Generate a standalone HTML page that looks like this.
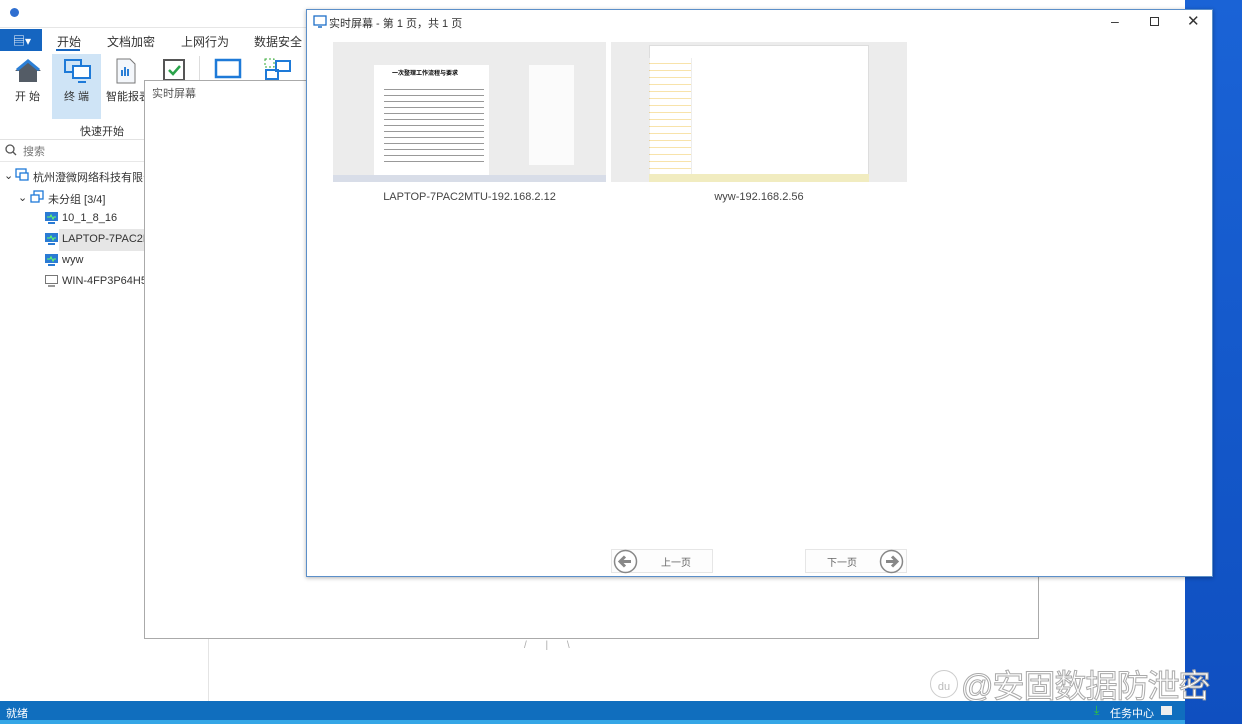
<!DOCTYPE html>
<html><head><meta charset="utf-8"><style>
*{margin:0;padding:0;box-sizing:border-box}
body{width:1242px;height:724px;overflow:hidden;position:relative;background:#fff;font-family:"Liberation Sans","Noto Sans CJK SC",sans-serif;font-size:12px;color:#333}
.a{position:absolute}
.tab{position:absolute;top:33px;font-size:12px;color:#333}
.lbl{position:absolute;font-size:11px;color:#333}
.tree{position:absolute;font-size:11px;color:#333;white-space:nowrap}
.thumb{position:absolute;background:#ececec}
</style></head><body>
<div class="a" style="left:1185px;top:0;width:57px;height:724px;background:linear-gradient(#1a63d6,#0f4fc0)"></div>
<div class="a" style="left:10px;top:8px;width:9px;height:9px;border-radius:50%;background:#2f6fd0"></div>
<div class="a" style="left:0;top:29px;width:42px;height:22px;background:#1565c0;color:#fff;font-size:12px;padding:3px 0 0 13px">▤▾</div>
<div class="tab" style="left:57px">开始</div>
<div class="a" style="left:56px;top:49px;width:24px;height:2px;background:#1565c0"></div>
<div class="tab" style="left:107px">文档加密</div>
<div class="tab" style="left:181px">上网行为</div>
<div class="tab" style="left:254px">数据安全</div>
<div class="a" style="left:0;top:27px;width:307px;height:1px;background:#e6e6e6"></div>
<div class="a" style="left:52px;top:54px;width:49px;height:65px;background:#cfe4f6"></div>
<svg class="a" style="left:14px;top:58px" width="28" height="26"><path d="M14 2 L1 13 H5 V24 H23 V13 H27 Z" fill="#545c66"/><path d="M3 12 L14 3 L25 12" stroke="#2c7fd6" stroke-width="3" fill="none"/></svg>
<div class="lbl" style="left:15px;top:88px">开 始</div>
<svg class="a" style="left:63px;top:58px" width="30" height="26"><rect x="2" y="2" width="16" height="12" fill="none" stroke="#1e7ad8" stroke-width="2"/><rect x="10" y="8" width="17" height="12" fill="#fff" stroke="#1e7ad8" stroke-width="2"/><path d="M15 24h8" stroke="#1e7ad8" stroke-width="2"/></svg>
<div class="lbl" style="left:64px;top:88px">终 端</div>
<svg class="a" style="left:115px;top:58px" width="22" height="26"><path d="M2 1h13l5 5v19H2z" fill="#f4f7fb" stroke="#777"/><rect x="6" y="12" width="2" height="6" fill="#2c7fd6"/><rect x="9" y="9" width="2" height="9" fill="#2c7fd6"/><rect x="12" y="11" width="2" height="7" fill="#2c7fd6"/></svg>
<div class="lbl" style="left:106px;top:88px">智能报表</div>
<svg class="a" style="left:162px;top:57px" width="24" height="24"><rect x="2" y="3" width="20" height="20" fill="none" stroke="#555" stroke-width="2"/><path d="M7 13l4 4 7-8" stroke="#2aa34a" stroke-width="2.5" fill="none"/></svg>
<div class="a" style="left:199px;top:56px;width:1px;height:50px;background:#ddd"></div>
<svg class="a" style="left:214px;top:58px" width="28" height="22"><rect x="2" y="2" width="24" height="17" fill="none" stroke="#1e7ad8" stroke-width="2.5"/></svg>
<svg class="a" style="left:264px;top:58px" width="28" height="22"><rect x="1" y="1" width="9" height="8" fill="none" stroke="#3a3" stroke-dasharray="2 2"/><rect x="12" y="3" width="14" height="10" fill="none" stroke="#1e7ad8" stroke-width="2"/><rect x="2" y="12" width="12" height="9" fill="none" stroke="#1e7ad8" stroke-width="2"/></svg>
<div class="lbl" style="left:80px;top:123px">快速开始</div>
<div class="a" style="left:0;top:139px;width:208px;height:1px;background:#e2e2e2"></div>
<svg class="a" style="left:5px;top:144px" width="12" height="12"><circle cx="5" cy="5" r="4" stroke="#555" stroke-width="1.3" fill="none"/><path d="M8 8l3 3" stroke="#555" stroke-width="1.3"/></svg>
<div class="tree" style="left:23px;top:143px;color:#777">搜索</div>
<div class="a" style="left:0;top:161px;width:208px;height:1px;background:#e8e8e8"></div>
<div class="a" style="left:208px;top:120px;width:1px;height:581px;background:#e4e4e4"></div>
<div class="tree" style="left:4px;top:169px">⌄</div>
<svg class="a" style="left:15px;top:168px" width="14" height="14"><rect x="1" y="1" width="10" height="8" fill="none" stroke="#1e7ad8" stroke-width="1.3"/><rect x="5" y="5" width="8" height="7" fill="#fff" stroke="#1e7ad8" stroke-width="1.3"/></svg>
<div class="tree" style="left:33px;top:169px;width:112px;overflow:hidden">杭州澄微网络科技有限公司</div>
<div class="tree" style="left:18px;top:191px">⌄</div>
<svg class="a" style="left:30px;top:190px" width="14" height="14"><rect x="4" y="1" width="9" height="8" fill="none" stroke="#1e7ad8" stroke-width="1.3"/><rect x="1" y="5" width="8" height="7" fill="#fff" stroke="#1e7ad8" stroke-width="1.3"/></svg>
<div class="tree" style="left:48px;top:191px">未分组 [3/4]</div>
<div class="a" style="left:59px;top:229px;width:86px;height:22px;background:#e6e6e6"></div>
<svg class="a" style="left:44px;top:211px" width="15" height="14"><rect x="1" y="1" width="13" height="9" fill="#2a7bd4"/><path d="M3 6h3l1-2 2 4 1-2h2" stroke="#6f6" fill="none"/><path d="M4 12h7" stroke="#2a7bd4" stroke-width="2"/></svg>
<div class="tree" style="left:62px;top:212px">10_1_8_16</div>
<svg class="a" style="left:44px;top:232px" width="15" height="14"><rect x="1" y="1" width="13" height="9" fill="#2a7bd4"/><path d="M3 6h3l1-2 2 4 1-2h2" stroke="#6f6" fill="none"/><path d="M4 12h7" stroke="#2a7bd4" stroke-width="2"/></svg>
<div class="tree" style="left:62px;top:233px">LAPTOP-7PAC2MTU</div>
<svg class="a" style="left:44px;top:253px" width="15" height="14"><rect x="1" y="1" width="13" height="9" fill="#2a7bd4"/><path d="M3 6h3l1-2 2 4 1-2h2" stroke="#6f6" fill="none"/><path d="M4 12h7" stroke="#2a7bd4" stroke-width="2"/></svg>
<div class="tree" style="left:62px;top:254px">wyw</div>
<svg class="a" style="left:44px;top:274px" width="15" height="14"><rect x="1.5" y="1.5" width="12" height="8" fill="none" stroke="#777"/><path d="M4 12h7" stroke="#777" stroke-width="1.5"/></svg>
<div class="tree" style="left:62px;top:275px">WIN-4FP3P64H5JK</div>
<div class="a" style="left:144px;top:80px;width:895px;height:559px;background:#fff;border:1px solid #aaa"></div>
<div class="a" style="left:152px;top:85px;font-size:11px;color:#555">实时屏幕</div>
<div class="a" style="left:524px;top:640px;font-size:10px;color:#aaa;letter-spacing:8px">/ | \</div>
<div class="a" style="left:306px;top:9px;width:907px;height:568px;background:#fff;border:1px solid #5b8fc9;box-shadow:0 1px 4px rgba(0,0,0,.3)"></div>
<svg class="a" style="left:313px;top:15px" width="14" height="14"><rect x="1" y="1" width="12" height="9" fill="none" stroke="#1e6fc8" stroke-width="1.3"/><path d="M5 12h4" stroke="#1e6fc8" stroke-width="1.5"/></svg>
<div class="a" style="left:329px;top:15px;font-size:11px;color:#333">实时屏幕 - 第 1 页，共 1 页</div>
<div class="a" style="left:1111px;top:13px;font-size:14px;color:#333">–</div>
<div class="a" style="left:1150px;top:17px;width:9px;height:9px;border:1px solid #333"></div>
<div class="a" style="left:1187px;top:12px;font-size:15px;color:#333">✕</div>
<div class="thumb" style="left:333px;top:42px;width:273px;height:140px"></div>
<div class="a" style="left:374px;top:65px;width:115px;height:112px;background:#fff"></div>
<div class="a" style="left:392px;top:68px;font-size:6px;color:#000;font-weight:bold">一次整理工作流程与要求</div>
<div class="a" style="left:384px;top:85px;width:100px;height:80px;background:repeating-linear-gradient(#fff 0 4px,#555 4px 5px,#fff 5px 6px);opacity:.6"></div>
<div class="a" style="left:529px;top:65px;width:45px;height:100px;background:#fff;opacity:.8"></div>
<div class="a" style="left:333px;top:175px;width:273px;height:7px;background:#d8dde8"></div>
<div class="thumb" style="left:611px;top:42px;width:296px;height:140px"></div>
<div class="a" style="left:649px;top:45px;width:220px;height:130px;background:#fff;border:1px solid #ddd"></div>
<div class="a" style="left:649px;top:58px;width:43px;height:117px;border-right:1px solid #ddd;background:repeating-linear-gradient(#fff 0 5px,#f3c857 5px 6px,#fff 6px 7px);opacity:.5"></div>
<div class="a" style="left:649px;top:174px;width:220px;height:8px;background:#f1ecc0"></div>
<div class="a" style="left:333px;top:191px;width:273px;text-align:center;font-size:11px;color:#444">LAPTOP-7PAC2MTU-192.168.2.12</div>
<div class="a" style="left:611px;top:191px;width:296px;text-align:center;font-size:11px;color:#444">wyw-192.168.2.56</div>
<div class="a" style="left:611px;top:549px;width:102px;height:24px;border:1px solid #e6e6e6;background:#fdfdfd"></div>
<svg class="a" style="left:613px;top:549px" width="25" height="25"><circle cx="12.5" cy="12.5" r="11" stroke="#888" stroke-width="1.5" fill="#fff"/><path d="M18 12.5H8M12 7.5l-5 5 5 5" stroke="#888" stroke-width="3" fill="none"/></svg>
<div class="a" style="left:661px;top:554px;font-size:10px;color:#666">上一页</div>
<div class="a" style="left:805px;top:549px;width:102px;height:24px;border:1px solid #e6e6e6;background:#fdfdfd"></div>
<svg class="a" style="left:879px;top:549px" width="25" height="25"><circle cx="12.5" cy="12.5" r="11" stroke="#888" stroke-width="1.5" fill="#fff"/><path d="M7 12.5h10M13 7.5l5 5-5 5" stroke="#888" stroke-width="3" fill="none"/></svg>
<div class="a" style="left:827px;top:554px;font-size:10px;color:#666">下一页</div>
<div class="a" style="left:930px;top:670px;width:28px;height:28px;border-radius:50%;border:1px solid #ccc;font-size:11px;color:#bbb;text-align:center;line-height:32px">du</div>
<div class="a" style="left:961px;top:661px;font-size:32px;color:#fff;-webkit-text-stroke:1px #aaa;letter-spacing:-1px;white-space:nowrap">@安固数据防泄密</div>
<div class="a" style="left:0;top:701px;width:1185px;height:19px;background:#106ebe"></div>
<div class="a" style="left:0;top:720px;width:1185px;height:4px;background:#35a6e6"></div>
<div class="a" style="left:6px;top:705px;font-size:11px;color:#fff">就绪</div>
<div class="a" style="left:1094px;top:703px;font-size:12px;color:#3c3">⤓</div>
<div class="a" style="left:1110px;top:705px;font-size:11px;color:#fff">任务中心</div>
<div class="a" style="left:1161px;top:706px;width:11px;height:9px;background:#eee"></div>
</body></html>
